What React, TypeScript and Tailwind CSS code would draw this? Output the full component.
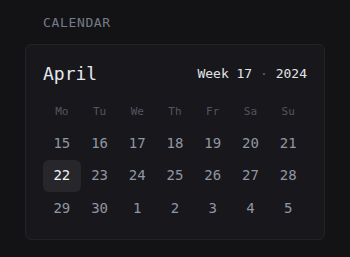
const weekdays = ["Mo", "Tu", "We", "Th", "Fr", "Sa", "Su"]

const days = [
  15, 16, 17, 18, 19, 20, 21,
  22, 23, 24, 25, 26, 27, 28,
  29, 30, 1, 2, 3, 4, 5,
]

export default function App() {
  return (
    <div className="min-h-[257px] w-[350px] bg-[#131316] px-[25px] pt-[15px] font-['DejaVu_Sans_Mono',monospace]">
      <div className="px-[18px] text-[13px] leading-4 tracking-[0.05em] text-[#747c89]">CALENDAR</div>
      <div className="mt-[13px] w-[300px] rounded-md border border-[#222227] bg-[#18181c] px-[17px] pb-[14px] pt-[17px]">
        <div className="flex items-center justify-between">
          <span className="text-[18px] leading-6 text-[#e6e8ee]">April</span>
          <span className="text-[13px] leading-4 text-[#e2e4ea]">
            Week 17 <span className="text-[#64666f]">·</span> 2024
          </span>
        </div>
        <div className="mt-[18px] grid grid-cols-7 text-center text-[11px] leading-4 text-[#53565f]">
          {weekdays.map((d) => (
            <div key={d}>{d}</div>
          ))}
        </div>
        <div className="mt-[7px] grid grid-cols-7 text-center text-[14px]">
          {days.map((d, i) => (
            <div
              key={i}
              className={
                d === 22
                  ? "flex h-[32.5px] items-center justify-center rounded-md bg-[#26262b] text-[#f1f2f5]"
                  : "flex h-[32.5px] items-center justify-center text-[#9096a2]"
              }
            >
              {d}
            </div>
          ))}
        </div>
      </div>
    </div>
  )
}
